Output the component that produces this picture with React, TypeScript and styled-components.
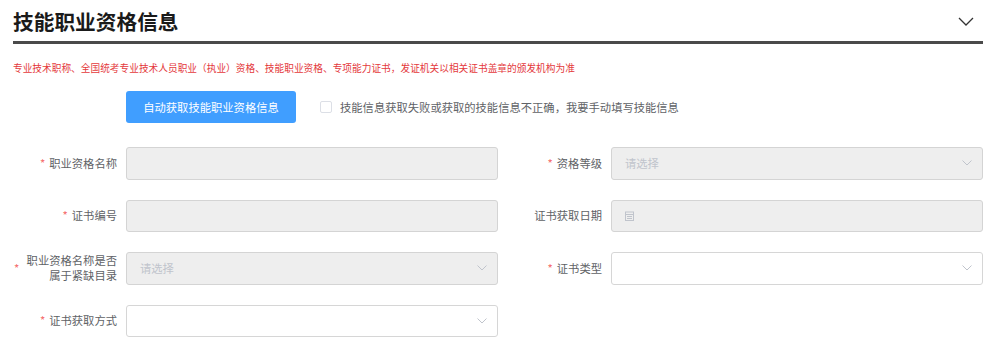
import React, { useState } from "react";
import styled, { createGlobalStyle } from "styled-components";

const GlobalStyle = createGlobalStyle`
  html, body {
    margin: 0;
    padding: 0;
    background: #ffffff;
  }
  body {
    font-family: "Noto Sans CJK SC", "Noto Sans", "Liberation Sans", sans-serif;
  }
  * {
    box-sizing: border-box;
  }
`;

const Section = styled.div`
  width: 1000px;
  padding: 0 17px 0 13px;
`;

const Header = styled.div`
  display: flex;
  align-items: center;
  justify-content: space-between;
  height: 44px;
  padding-top: 2px;
  border-bottom: 3px solid #4a4a4a;
`;

const Title = styled.h2`
  margin: 0;
  font-size: 20.7px;
  line-height: 1;
  font-weight: 700;
  color: #1a1a1a;
`;

const Collapse = styled.button`
  border: 0;
  background: none;
  padding: 0;
  margin-right: 9px;
  display: flex;
  cursor: pointer;
`;

const Note = styled.p`
  margin: 17px 0 0;
  font-size: 9.7px;
  line-height: 14px;
  color: #e4393c;
  white-space: nowrap;
`;

const ActionRow = styled.div`
  display: flex;
  align-items: center;
  gap: 24px;
  margin-top: 16px;
  padding-left: 113px;
`;

const FetchButton = styled.button`
  width: 170px;
  height: 32px;
  border: 0;
  border-radius: 3px;
  background: #409eff;
  color: #ffffff;
  font-family: inherit;
  font-size: 11.3px;
  cursor: pointer;
`;

const CheckLabel = styled.label`
  display: flex;
  align-items: center;
  gap: 8px;
  font-size: 11.3px;
  color: #606266;
  cursor: pointer;
`;

const CheckBox = styled.span<{ $checked: boolean }>`
  width: 12px;
  height: 12px;
  border: 1px solid #dcdfe6;
  border-radius: 2px;
  background: ${(p) => (p.$checked ? "#409eff" : "#ffffff")};
`;

const FormGrid = styled.div`
  display: grid;
  grid-template-columns: 1fr 1fr;
  row-gap: 20px;
  margin-top: 24px;
`;

const FormItem = styled.div`
  display: flex;
  align-items: center;
  height: 32.5px;
`;

const Label = styled.label<{ $spread?: boolean }>`
  flex: 0 0 113px;
  padding-right: 9px;
  display: flex;
  align-items: center;
  justify-content: ${(p) => (p.$spread ? "space-between" : "flex-end")};
  text-align: right;
  font-size: 11.3px;
  line-height: 15px;
  color: #606266;
`;

const Star = styled.span`
  color: #f56c6c;
  margin-right: 4px;
  margin-left: 1px;
`;

const WrapText = styled.span`
  width: 91px;
`;

const Field = styled.div<{ $disabled?: boolean }>`
  flex: 1;
  height: 100%;
  display: flex;
  align-items: center;
  gap: 8px;
  padding: 0 10px 0 13px;
  border: 1px solid ${(p) => (p.$disabled ? "#d4d4d4" : "#d6d6d6")};
  border-radius: 3px;
  background: ${(p) => (p.$disabled ? "#eeeeee" : "#ffffff")};
  font-size: 11.3px;
  color: #c0c4cc;
`;

const Placeholder = styled.span`
  flex: 1;
`;

const Arrow = () => (
  <svg width="10" height="6" viewBox="0 0 10 6" fill="none">
    <polyline points="0.5,0.5 5,5 9.5,0.5" stroke="#c0c4cc" strokeWidth="1" />
  </svg>
);

const CalendarIcon = () => (
  <svg width="9" height="10" viewBox="0 0 9 10" fill="none">
    <rect x="0.5" y="1" width="8" height="8.5" stroke="#c0c4cc" strokeWidth="1" />
    <line x1="0.5" y1="3.5" x2="8.5" y2="3.5" stroke="#c0c4cc" />
    <line x1="2" y1="5.5" x2="7" y2="5.5" stroke="#c0c4cc" />
    <line x1="2" y1="7.5" x2="7" y2="7.5" stroke="#c0c4cc" />
  </svg>
);

const App: React.FC = () => {
  const [manual, setManual] = useState(false);

  return (
    <Section>
      <GlobalStyle />
      <Header>
        <Title>技能职业资格信息</Title>
        <Collapse>
          <svg width="16" height="9" viewBox="0 0 16 9" fill="none">
            <polyline points="1,1 8,8 15,1" stroke="#333333" strokeWidth="1.3" />
          </svg>
        </Collapse>
      </Header>
      <Note>
        专业技术职称、全国统考专业技术人员职业（执业）资格、技能职业资格、专项能力证书，发证机关以相关证书盖章的颁发机构为准
      </Note>
      <ActionRow>
        <FetchButton>自动获取技能职业资格信息</FetchButton>
        <CheckLabel onClick={() => setManual(!manual)}>
          <CheckBox $checked={manual} />
          技能信息获取失败或获取的技能信息不正确，我要手动填写技能信息
        </CheckLabel>
      </ActionRow>
      <FormGrid>
        <FormItem>
          <Label>
            <Star>*</Star>职业资格名称
          </Label>
          <Field $disabled />
        </FormItem>
        <FormItem>
          <Label>
            <Star>*</Star>资格等级
          </Label>
          <Field $disabled>
            <Placeholder>请选择</Placeholder>
            <Arrow />
          </Field>
        </FormItem>
        <FormItem>
          <Label>
            <Star>*</Star>证书编号
          </Label>
          <Field $disabled />
        </FormItem>
        <FormItem>
          <Label>证书获取日期</Label>
          <Field $disabled>
            <CalendarIcon />
          </Field>
        </FormItem>
        <FormItem>
          <Label $spread>
            <Star>*</Star>
            <WrapText>职业资格名称是否属于紧缺目录</WrapText>
          </Label>
          <Field $disabled>
            <Placeholder>请选择</Placeholder>
            <Arrow />
          </Field>
        </FormItem>
        <FormItem>
          <Label>
            <Star>*</Star>证书类型
          </Label>
          <Field>
            <Placeholder />
            <Arrow />
          </Field>
        </FormItem>
        <FormItem>
          <Label>
            <Star>*</Star>证书获取方式
          </Label>
          <Field>
            <Placeholder />
            <Arrow />
          </Field>
        </FormItem>
      </FormGrid>
    </Section>
  );
};

export default App;
